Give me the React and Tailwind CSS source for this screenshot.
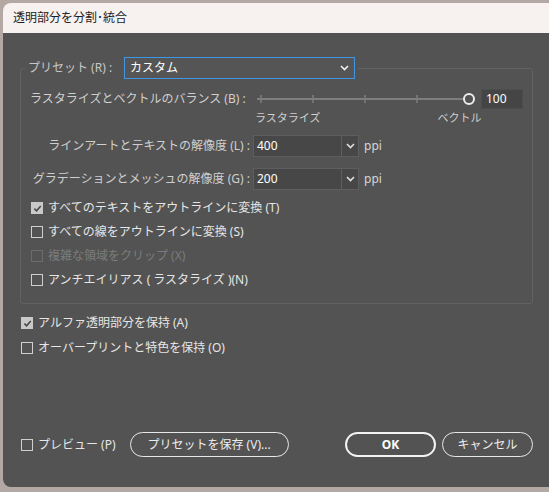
import React from "react";

const font = { fontFamily: '"Noto Sans", "Noto Sans CJK JP", sans-serif' };

const Check = ({ checked, disabled, children }) => (
  <div className={`flex items-center h-[20px] ${disabled ? "text-[#7c7c7c]" : "text-[#e6e6e6]"}`}>
    <span
      className={`w-[12px] h-[12px] mr-[5px] flex items-center justify-center border ${
        checked ? "bg-[#c9c9c9] border-[#c9c9c9]" : disabled ? "border-[#6c6c6c]" : "border-[#cfcfcf]"
      }`}
    >
      {checked && (
        <svg width="9" height="9" viewBox="0 0 10 10">
          <path d="M1.5 5.2 L4 7.6 L8.6 2.2" fill="none" stroke="#4a4a4a" strokeWidth="1.8" />
        </svg>
      )}
    </span>
    <span className="text-[12px] leading-none whitespace-nowrap">{children}</span>
  </div>
);

const Chevron = ({ color = "#e0e0e0" }) => (
  <svg width="9" height="6" viewBox="0 0 9 6">
    <path d="M1 1 L4.5 4.5 L8 1" fill="none" stroke={color} strokeWidth="1.6" />
  </svg>
);

const Combo = ({ value }) => (
  <div className="flex items-center">
    <div className="flex h-[22px] border border-[#5e5e5e] bg-[#474747]">
      <div className="w-[87px] px-[3px] flex items-center text-[12px] text-white">{value}</div>
      <div className="w-[17px] border-l border-[#5e5e5e] flex items-center justify-center">
        <Chevron />
      </div>
    </div>
    <span className="ml-[5px] text-[12px] text-[#d6d6d6]">ppi</span>
  </div>
);

export default function App() {
  return (
    <div className="w-[549px] h-[492px] overflow-hidden bg-[#b3a8a4]" style={font}>
      <div className="ml-[3px] mt-[3px] w-[570px] h-[484px] rounded-[8px] overflow-hidden flex flex-col">
        <div className="h-[30px] bg-[#f7f1f0] flex items-center px-[10px] text-[12px] text-[#1c1c1c]">
          透明部分を分割･統合
        </div>
        <div className="flex-1 bg-[#535353] flex flex-col pl-[17px] w-[546px]">
          <fieldset className="mt-[24px] w-[513px] h-[247px] border border-[#626262] rounded-[3px] pl-[9px] pr-0">
            <legend className="ml-[-5px] px-[3px] flex items-center">
              <span className="w-[96px] text-[12px] text-[#c7c7c7] whitespace-nowrap">プリセット (R) :</span>
              <div className="w-[231px] h-[22px] border-[1.5px] border-[#4096e6] bg-[#555555] flex items-center justify-between px-[5px]">
                <span className="text-[12px] text-white">カスタム</span>
                <Chevron color="#f0f0f0" />
              </div>
            </legend>
            <div className="flex items-center h-[20px] mt-[10px]">
              <span className="w-[227px] text-[12px] text-[#cfcfcf] whitespace-nowrap">ラスタライズとベクトルのバランス (B) :</span>
              <svg width="222" height="20" viewBox="0 0 222 20">
                <line x1="0" y1="10" x2="207" y2="10" stroke="#7e7e7e" strokeWidth="2" />
                {[4, 56, 108, 160].map((x) => (
                  <line key={x} x1={x} y1="6" x2={x} y2="14" stroke="#7e7e7e" strokeWidth="1.5" />
                ))}
                <circle cx="212" cy="10" r="5" fill="#535353" stroke="#ececec" strokeWidth="2" />
              </svg>
              <div className="ml-[2px] w-[42px] h-[20px] bg-[#454545] border border-[#4d4d4d] flex items-center px-[4px] text-[12px] text-white">
                100
              </div>
            </div>
            <div className="flex h-[16px] mt-[1px] pl-[225px] text-[11px] text-[#cfcfcf]">
              <span>ラスタライズ</span>
              <span className="ml-[117px]">ベクトル</span>
            </div>
            <div className="flex items-center mt-[9px]">
              <span className="w-[223px] text-right pr-[3px] text-[12px] text-[#cfcfcf] whitespace-nowrap">ラインアートとテキストの解像度 (L) :</span>
              <Combo value="400" />
            </div>
            <div className="flex items-center mt-[11px]">
              <span className="w-[223px] text-right pr-[3px] text-[12px] text-[#cfcfcf] whitespace-nowrap">グラデーションとメッシュの解像度 (G) :</span>
              <Combo value="200" />
            </div>
            <div className="flex flex-col gap-[4px] mt-[8px] pl-[1px]">
              <Check checked>すべてのテキストをアウトラインに変換 (T)</Check>
              <Check>すべての線をアウトラインに変換 (S)</Check>
              <Check disabled>複雑な領域をクリップ (X)</Check>
              <Check>アンチエイリアス ( ラスタライズ )(N)</Check>
            </div>
          </fieldset>
          <div className="flex flex-col gap-[5px] mt-[9px] pl-[1px]">
            <Check checked>アルファ透明部分を保持 (A)</Check>
            <Check>オーバープリントと特色を保持 (O)</Check>
          </div>
          <div className="flex items-center mt-[74px] pl-[1px] w-[513px]">
            <Check>プレビュー (P)</Check>
            <button className="ml-[14px] w-[159px] h-[25px] rounded-full border-[1.5px] border-[#e8e8e8] text-[12px] text-[#ececec] whitespace-nowrap">
              プリセットを保存 (V)...
            </button>
            <button className="ml-auto w-[91px] h-[25px] rounded-full border-2 border-[#f2f2f2] text-[12px] font-bold text-white">
              OK
            </button>
            <button className="ml-[6px] w-[91px] h-[25px] rounded-full border-[1.5px] border-[#e8e8e8] text-[12px] text-[#ececec]">
              キャンセル
            </button>
          </div>
        </div>
      </div>
    </div>
  );
}
